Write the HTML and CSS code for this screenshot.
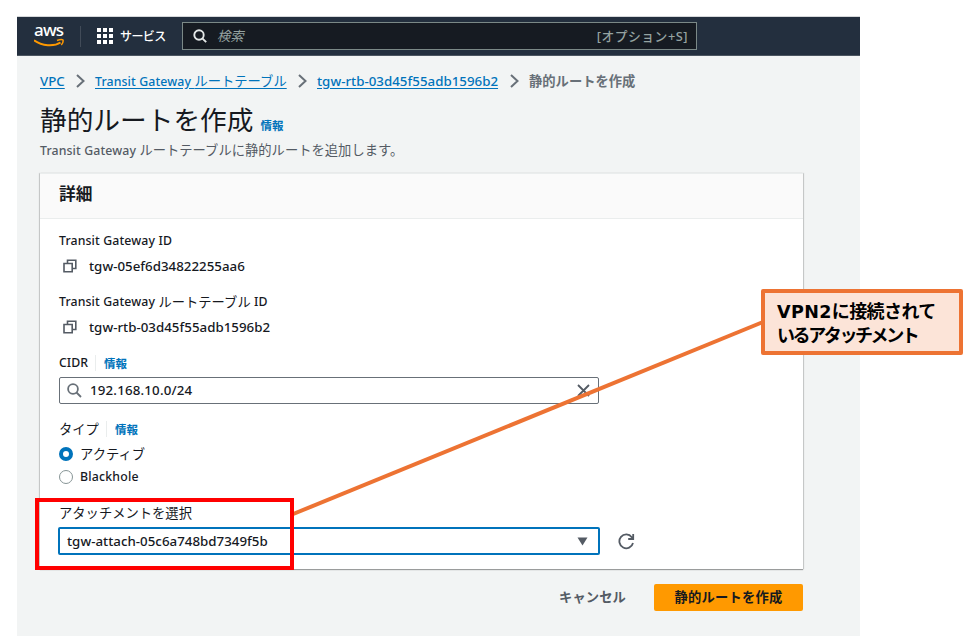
FILE: index.html
```html
<!DOCTYPE html>
<html lang="ja">
<head>
<meta charset="utf-8">
<title>静的ルートを作成</title>
<link rel="stylesheet" href="styles.css">
</head>
<body>
<div class="console">
  <header class="topbar">
    <div class="brand"><span class="brand-name">aws</span>
      <svg class="smile" width="32" height="10" viewBox="0 0 32 10"><path d="M0 2.300C8 8.200 20 8.800 26.500 4.500" fill="none" stroke="#f90" stroke-width="2"/><path d="M23 2.500Q27.500 .8 29 2Q29.600 4.500 27.300 7" fill="none" stroke="#f90" stroke-width="1.500"/></svg>
    </div>
    <i class="bar"></i>
    <svg class="grid-icon" width="16" height="16" fill="#fff"><path d="M0 0h4v4H0zM6 0h4v4H6zM12 0h4v4h-4zM0 6h4v4H0zM6 6h4v4H6zM12 6h4v4h-4zM0 12h4v4H0zM6 12h4v4H6zM12 12h4v4h-4z"/></svg>
    <span class="services">サービス</span>
    <div class="search">
      <svg width="14" height="14" viewBox="0 0 14 14" fill="none" stroke="#e4e8e8" stroke-width="1.900"><circle cx="6" cy="6" r="4.700"/><path d="M9.300 9.300L13.200 13.200"/></svg>
      <span class="placeholder">検索</span><span class="shortcut">[オプション+S]</span>
    </div>
  </header>
  <main>
    <nav class="crumbs">
      <a class="c1"><span class="en">VPC</span></a>
      <svg class="chev" viewBox="0 0 9 14"><path d="M1 1L7.500 7L1 13"/></svg>
      <a class="c2"><span class="en">Transit Gateway </span>ルートテーブル</a>
      <svg class="chev" viewBox="0 0 9 14"><path d="M1 1L7.500 7L1 13"/></svg>
      <a class="c3"><span class="en id">tgw-rtb-03d45f55adb1596b2</span></a>
      <svg class="chev" viewBox="0 0 9 14"><path d="M1 1L7.500 7L1 13"/></svg>
      <b>静的ルートを作成</b>
    </nav>
    <div class="heading"><h1>静的ルートを作成</h1><a class="info">情報</a></div>
    <p class="desc"><span class="en">Transit Gateway </span>ルートテーブルに静的ルートを追加します。</p>
    <section class="card">
      <h2>詳細</h2>
      <div class="body">
        <div class="line"><span class="en">Transit Gateway ID</span></div>
        <div class="line value"><svg class="copy" viewBox="0 0 14 14"><path d="M1 4.500h8.200v8.200H1zM4.500 4V1.200h8.300v8.300H9.500"/></svg><span class="en id">tgw-05ef6d34822255aa6</span></div>
        <div class="line group"><span class="en">Transit Gateway </span>ルートテーブル<span class="en"> ID</span></div>
        <div class="line value"><svg class="copy" viewBox="0 0 14 14"><path d="M1 4.500h8.200v8.200H1zM4.500 4V1.200h8.300v8.300H9.500"/></svg><span class="en id">tgw-rtb-03d45f55adb1596b2</span></div>
        <div class="line group label"><span class="en cidr">CIDR</span><i></i><a class="info">情報</a></div>
        <div class="input">
          <svg width="15" height="15" viewBox="0 0 15 15" fill="none" stroke="#687078" stroke-width="1.800"><circle cx="6" cy="6" r="4.900"/><path d="M9.500 9.500L14 14"/></svg>
          <span class="en ip">192.168.10.0/24</span>
          <svg class="clear" width="13" height="13" viewBox="0 0 13 13" fill="none" stroke="#545b64" stroke-width="1.800"><path d="M1 1L12 12M12 1L1 12"/></svg>
        </div>
        <div class="line type label">タイプ<i></i><a class="info">情報</a></div>
        <div class="line option active"><span class="radio on"></span>アクティブ</div>
        <div class="line option"><span class="radio"></span><span class="en blackhole">Blackhole</span></div>
        <div class="line group attachment">アタッチメントを選択</div>
        <div class="select-row">
          <div class="select"><span class="en id">tgw-attach-05c6a748bd7349f5b</span><svg width="11" height="9" fill="#545b64"><path d="M.5 .5h10L5.500 8.500z"/></svg></div>
          <svg class="refresh" width="17" height="17" viewBox="0 0 17 17" fill="none" stroke="#545b64" stroke-width="1.800"><path d="M15 10A6.900 6.900 0 1 1 13.800 4.200L15 5.700M15.200 1V6H10.200"/></svg>
        </div>
      </div>
    </section>
    <div class="actions"><b class="cancel">キャンセル</b><b class="submit">静的ルートを作成</b></div>
  </main>
</div>
<svg class="connector" width="976" height="643"><path d="M292 514.500L763 322" stroke="#ed7333" stroke-width="4"/></svg>
<div class="highlight"></div>
<div class="callout"><div><span class="vpn">VPN2</span>に接続されて</div><div class="second">いるアタッチメント</div></div>
</body>
</html>
```
FILE: styles.css
```css
* { box-sizing: border-box; }
body { margin: 0; width: 976px; height: 643px; overflow: hidden; background: #fff; color: #16191f; padding: 16px 0 0 17px; font: 13.3px/20px "Noto Sans CJK JP", sans-serif; }
svg { display: block; flex: none; }
.console { width: 843px; height: 620px; background: #f2f4f4; }
.topbar { height: 40px; background: #232f3e; border-top: 1px solid #d6d8da; border-bottom: 1px solid #4b5560; display: flex; align-items: center; padding-left: 17px; }
.brand { width: 32px; height: 30px; color: #fff; }
.brand-name { display: block; font: 500 17px/20px "Noto Sans", sans-serif; height: 18px; margin-top: -1px; letter-spacing: -.8px; }
.smile { margin-top: 0; }
.bar { width: 1px; height: 21px; background: #414b58; margin: 0 16px 0 14px; }
.services { color: #fff; font-size: 12px; font-weight: 500; margin-left: 7px; width: 62px; white-space: nowrap; letter-spacing: -.6px; }
.search { width: 515px; height: 28px; background: #161b22; border: 1px solid #7b8987; display: flex; align-items: center; padding: 0 8px 0 10px; }
.placeholder { font-style: italic; font-size: 13.3px; color: #95a3a1; margin-left: 10px; }
.shortcut { margin-left: auto; color: #95a3a1; font: 500 12.8px/20px "Noto Sans", "Noto Sans CJK JP", sans-serif; letter-spacing: .5px; }
main { padding: 15px 57px 0 23px; }
.en { font-family: "Noto Sans", sans-serif; font-size: 12.3px; font-weight: 500; white-space: pre; letter-spacing: .13px; }
.id { font-size: 13.3px; letter-spacing: .02px; }
.value .id, .select .id, .ip { margin-top: -1px; }
.ip { font-size: 13.3px; letter-spacing: .18px; }
.cidr { letter-spacing: 0; }
.blackhole { letter-spacing: .2px; }
.crumbs { display: flex; align-items: center; height: 20px; white-space: nowrap; }
.crumbs b { font-weight: 700; color: #687078; }
a { color: #0073bb; text-decoration: underline; text-underline-offset: 2px; }
.c1 { width: 25px; } .c2 { width: 192px; } .c3 { width: 182px; }
.c1 .en { font-size: 13.3px; letter-spacing: 0; }
.chev { width: 9px; height: 14px; margin: 0 10px 0 11px; fill: none; stroke: #687078; stroke-width: 2; }
.heading { display: flex; align-items: flex-start; height: 36px; margin-top: 10px; }
h1 { font-size: 26.7px; line-height: 35px; font-weight: 400; margin: 0; }
.info { font-size: 11.5px; font-weight: 700; text-decoration: none; line-height: 20px; }
.heading .info { margin: 14px 0 0 7px; }
.desc { margin: 3px 0 0; color: #545b64; height: 20px; white-space: nowrap; }
.card { margin-top: 13px; width: 763px; height: 396px; background: #fff; box-shadow: 0 1px 1px #0005, 1px 0 1px #0002, -1px 0 1px #0002; }
h2 { margin: 0; height: 46px; background: #fafafa; border-top: 1px solid #eaeded; border-bottom: 1px solid #eaeded; font-size: 16.7px; line-height: 39px; font-weight: 700; padding-left: 19px; }
.body { padding: 12px 0 14px 19px; }
.line { height: 20px; display: flex; align-items: center; white-space: nowrap; }
.group { margin-top: 16px; }
.value { margin-top: 5px; padding-left: 4px; }
.copy { width: 14px; height: 14px; margin-right: 12px; fill: none; stroke: #545b64; stroke-width: 1.6; }
.label i { width: 1px; height: 16px; background: #eaeded; margin: 0 8px 0 7px; }
.input { width: 540px; height: 27px; border: 1px solid #687078; border-radius: 2px; margin-top: 4px; display: flex; align-items: center; padding: 0 8px 0 7px; }
.input .en { margin-left: 8px; }
.clear { margin-left: auto; }
.type { margin-top: 15px; }
.option { margin-top: 3px; }
.active { margin-top: 5px; }
.radio { width: 14px; height: 14px; border: 1px solid #879596; border-radius: 50%; margin-right: 7px; background: #fff; }
.radio.on { border: 4.5px solid #0073bb; }
.select-row { display: flex; align-items: center; margin: 4px 0 0 -1px; }
.select { width: 542px; height: 28px; border: 2px solid #0073bb; border-radius: 2px; display: flex; align-items: center; justify-content: space-between; padding: 0 10px 0 7px; }
.refresh { margin-left: 18px; }
.actions { display: flex; justify-content: flex-end; margin-top: 15px; line-height: 26px; width: 763px; }
.cancel { color: #545b64; margin-right: 28px; letter-spacing: .1px; }
.submit { width: 149px; height: 27px; border-radius: 2px; background: #ff9900; text-align: center; letter-spacing: .2px; }
.connector { position: absolute; left: 0; top: 0; }
.highlight { position: absolute; left: 35px; top: 498px; width: 259px; height: 72px; border: 4px solid #f00; }
.callout { position: absolute; left: 761px; top: 289px; width: 202px; height: 66px; border: 4px solid #ed7333; border-radius: 2px; background: #fce4d8; color: #000; font: 700 18px/24px "Noto Sans CJK JP", sans-serif; padding: 5px 0 0 12px; white-space: nowrap; letter-spacing: -.6px; }
.vpn { font: 700 17.5px/20px "DejaVu Sans", sans-serif; letter-spacing: .4px; }
.second { letter-spacing: -2.4px; }
```
